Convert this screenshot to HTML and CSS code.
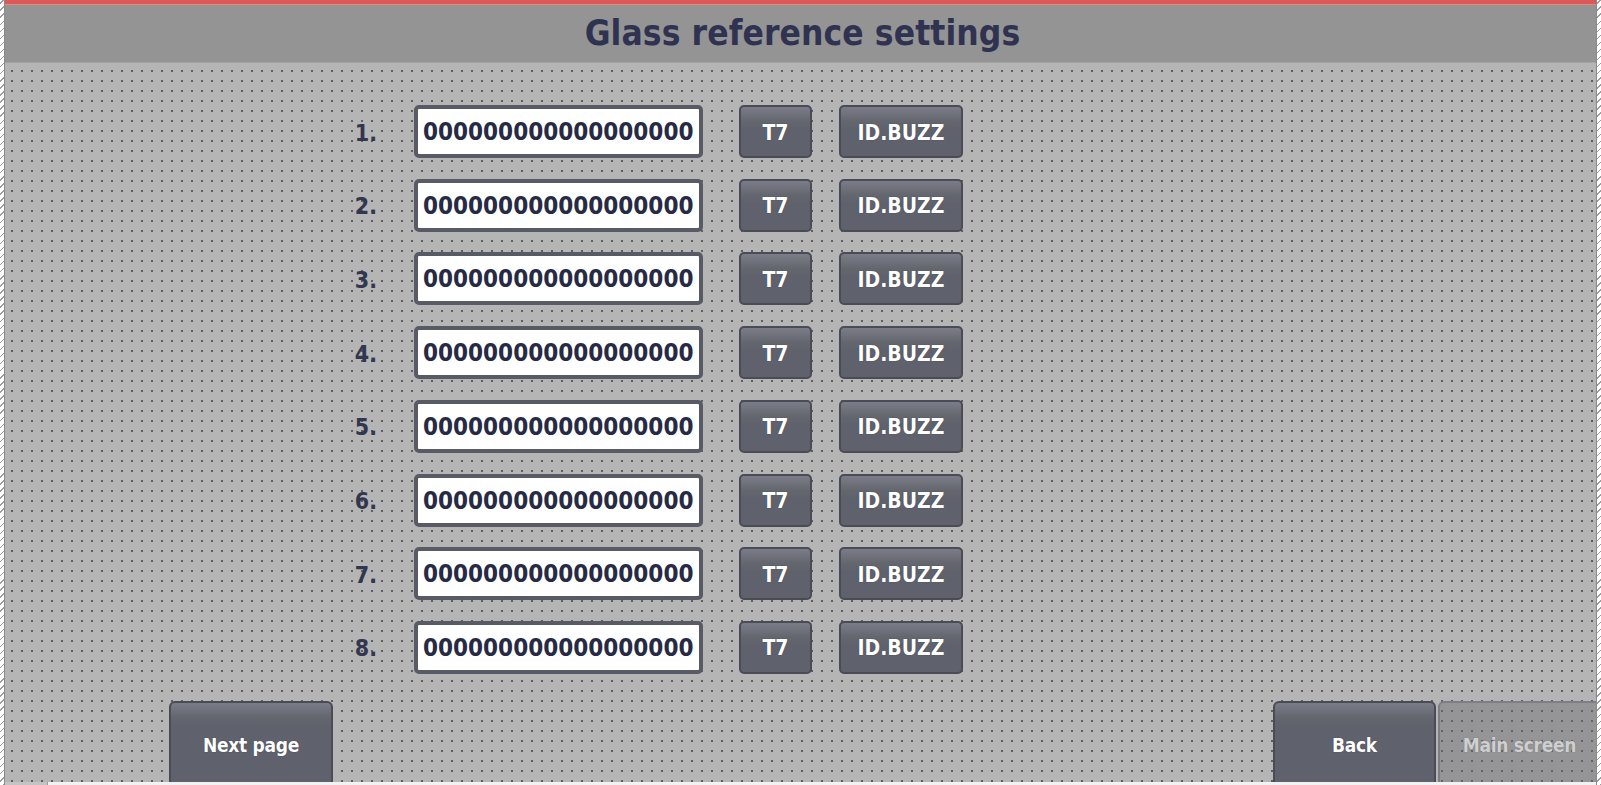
FILE: index.html
```html
<!DOCTYPE html>
<html lang="en">
<head>
<meta charset="utf-8">
<title>Glass reference settings</title>
<link rel="stylesheet" href="styles.css">
</head>
<body>
<div class="screen">
  <div class="topbar"></div>
  <header class="header"><h1 class="title">Glass reference settings</h1></header>
  <main class="content">
    <div class="rows">
      <div class="row"><span class="num">1.</span><div class="field">000000000000000000</div><button class="btn btn-t7">T7</button><button class="btn btn-id">ID.BUZZ</button></div>
      <div class="row"><span class="num">2.</span><div class="field">000000000000000000</div><button class="btn btn-t7">T7</button><button class="btn btn-id">ID.BUZZ</button></div>
      <div class="row"><span class="num">3.</span><div class="field">000000000000000000</div><button class="btn btn-t7">T7</button><button class="btn btn-id">ID.BUZZ</button></div>
      <div class="row"><span class="num">4.</span><div class="field">000000000000000000</div><button class="btn btn-t7">T7</button><button class="btn btn-id">ID.BUZZ</button></div>
      <div class="row"><span class="num">5.</span><div class="field">000000000000000000</div><button class="btn btn-t7">T7</button><button class="btn btn-id">ID.BUZZ</button></div>
      <div class="row"><span class="num">6.</span><div class="field">000000000000000000</div><button class="btn btn-t7">T7</button><button class="btn btn-id">ID.BUZZ</button></div>
      <div class="row"><span class="num">7.</span><div class="field">000000000000000000</div><button class="btn btn-t7">T7</button><button class="btn btn-id">ID.BUZZ</button></div>
      <div class="row"><span class="num">8.</span><div class="field">000000000000000000</div><button class="btn btn-t7">T7</button><button class="btn btn-id">ID.BUZZ</button></div>
    </div>
    <div class="navbar">
      <button class="btn btn-nav">Next page</button>
      <div class="nav-right">
        <button class="btn btn-nav">Back</button>
        <button class="btn btn-nav btn-disabled">Main screen</button>
      </div>
    </div>
  </main>
  <div class="bottomstrip"><span class="strip-left"></span><span class="strip-right"></span></div>
  <div class="edge edge-left"></div>
  <div class="edge edge-right"></div>
</div>
</body>
</html>
```

FILE: styles.css
```css
html, body {
  margin: 0;
  padding: 0;
}
body {
  width: 1601px;
  height: 785px;
  overflow: hidden;
  background: #b5b5b5;
  font-family: "DejaVu Sans Condensed", "DejaVu Sans", sans-serif;
  font-stretch: condensed;
}
.screen {
  position: relative;
  width: 1601px;
  height: 785px;
  display: flex;
  flex-direction: column;
  background-color: #b5b5b5;
  background-image:
    linear-gradient(to right, #b5b5b5 8px, transparent 8px),
    linear-gradient(to bottom, #b5b5b5 8px, #5e5e5e 8px);
  background-size: 10px 10px;
  background-position: 3px 2px;
}
.topbar {
  height: 4px;
  background: #dd5858;
  border-bottom: 1px solid #e48a80;
  flex: none;
}
.header {
  height: 57px;
  background: #949494;
  border-bottom: 1px solid #a3a3a3;
  display: flex;
  align-items: center;
  justify-content: center;
  flex: none;
}
.title {
  margin: 0;
  font-size: 35px;
  font-weight: bold;
  color: #2f3250;
  letter-spacing: 0.1px;
  padding-left: 4px;
  padding-bottom: 1px;
}
.content {
  flex: 1;
  display: flex;
  flex-direction: column;
  padding-top: 42px;
}
.rows {
  display: flex;
  flex-direction: column;
  row-gap: 20.71px;
  padding-left: 337px;
}
.row {
  display: flex;
  align-items: center;
  height: 53px;
}
.num {
  width: 40px;
  text-align: right;
  font-size: 23px;
  font-weight: bold;
  color: #33364f;
  margin-right: 37px;
  padding-top: 2px;
}
.field {
  box-sizing: border-box;
  width: 289px;
  height: 53px;
  border: 4px solid #585a65;
  border-radius: 5px;
  background: #ffffff;
  color: #272a44;
  font-size: 24px;
  font-weight: bold;
  line-height: 46px;
  padding-left: 5px;
  white-space: nowrap;
  overflow: hidden;
  margin-right: 36px;
}
.btn {
  box-sizing: border-box;
  border: 2px solid #4a4b55;
  border-radius: 5px;
  background: linear-gradient(to bottom, #7a7c88 0px, #65676f 14px, #5f616c 22px, #5f616c 100%);
  color: #ffffff;
  font-family: "DejaVu Sans Condensed", "DejaVu Sans", sans-serif;
  font-stretch: condensed;
  font-weight: bold;
  padding: 0;
  text-shadow: 0 0 1px rgba(20, 20, 40, 0.6);
  cursor: pointer;
}
.btn-t7 {
  width: 73px;
  height: 53px;
  font-size: 21px;
  margin-right: 27px;
  padding-top: 2px;
}
.btn-id {
  width: 124px;
  height: 53px;
  font-size: 21px;
  padding-top: 2px;
}
.navbar {
  display: flex;
  justify-content: space-between;
  align-items: flex-start;
  margin-top: 27px;
  padding-left: 169px;
  height: 81px;
}
.nav-right {
  display: flex;
  gap: 2px;
}
.btn-nav {
  width: 164px;
  height: 84px;
  font-size: 19px;
  letter-spacing: -0.3px;
  padding-top: 4px;
  border-radius: 6px 6px 0 0;
}
.nav-right .btn-nav {
  width: 163px;
}
.btn-disabled {
  background: rgba(110, 110, 118, 0.45);
  border-color: #7e7e84;
  color: #cfcfcf;
  text-shadow: 0 0 1px rgba(60, 60, 60, 0.5);
}
.bottomstrip {
  position: absolute;
  left: 0;
  right: 0;
  bottom: 0;
  height: 3px;
  display: flex;
}
.strip-left {
  width: 47px;
  background: #c4c4c4;
}
.strip-right {
  flex: 1;
  background: #f2f2f2;
  border-left: 1px solid #9a9a9a;
}
.edge {
  position: absolute;
  top: 0;
  bottom: 0;
  width: 4px;
  background: repeating-linear-gradient(135deg, #ffffff 0 2px, #9c9c9c 2px 3px, #ffffff 3px 5px);
}
.edge-left {
  left: 0;
  border-right: 1px solid #8a8a8a;
}
.edge-right {
  right: 0;
  border-left: 1px solid #8a8a8a;
}
```
